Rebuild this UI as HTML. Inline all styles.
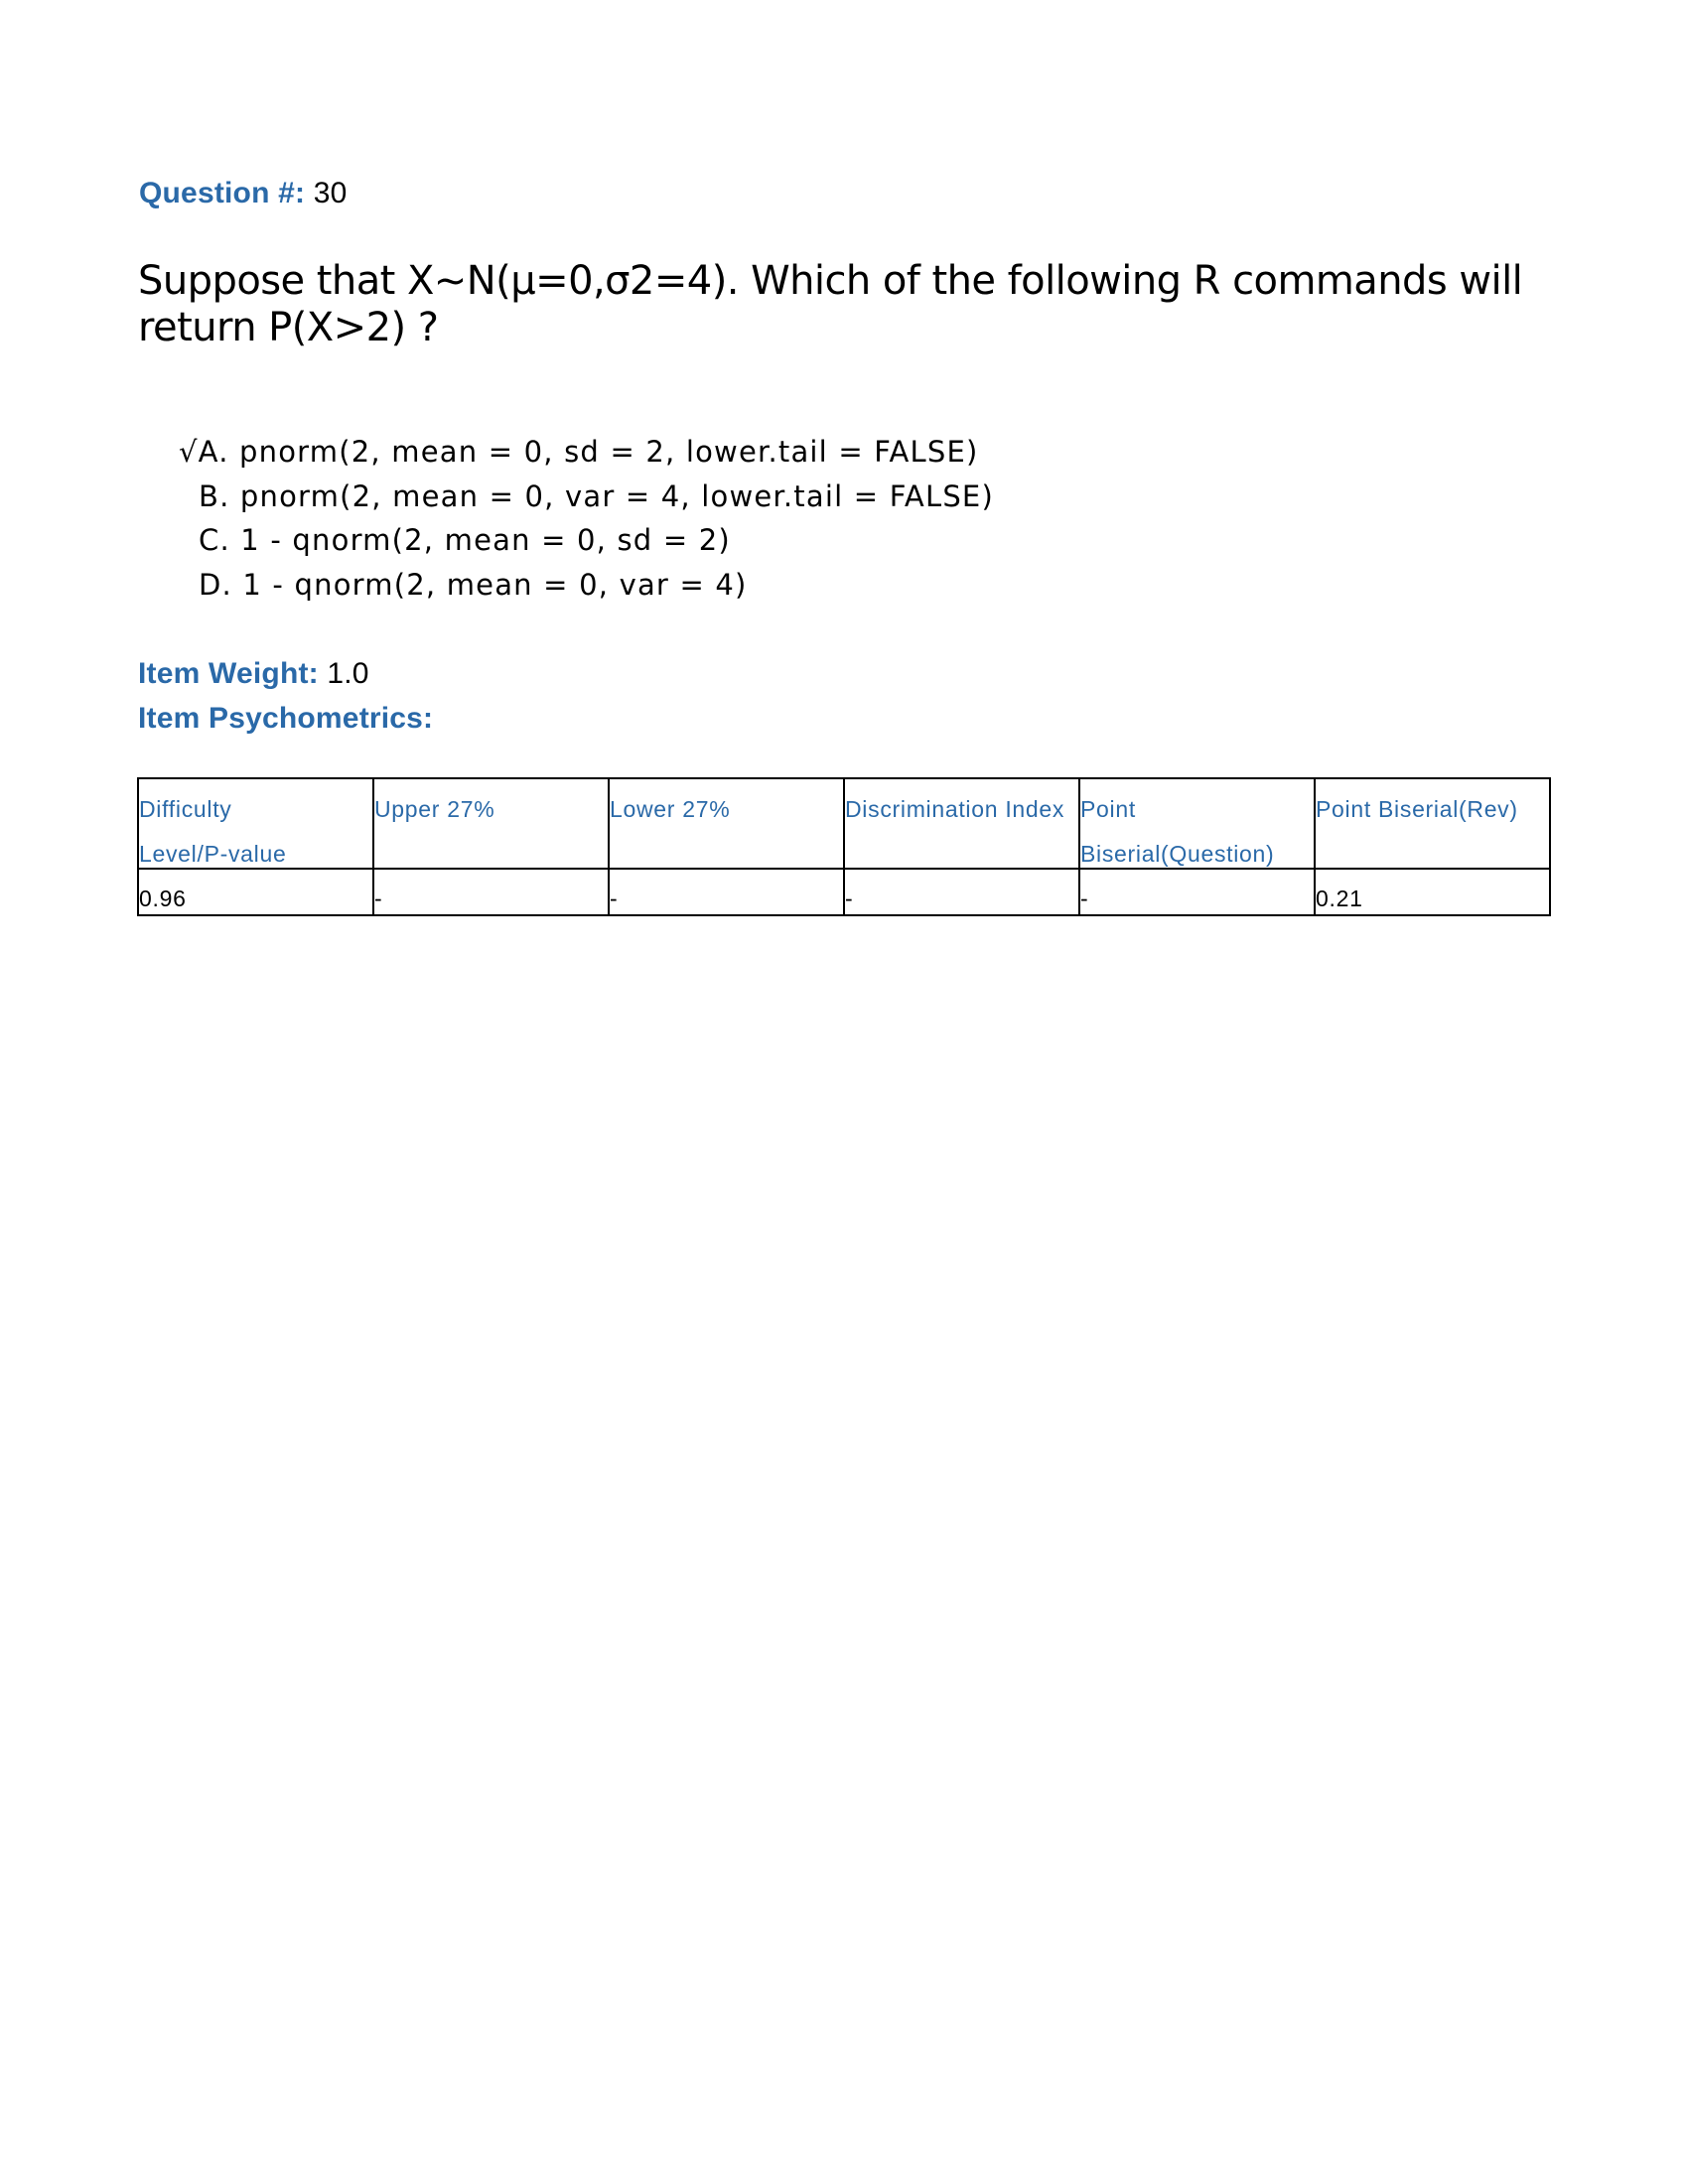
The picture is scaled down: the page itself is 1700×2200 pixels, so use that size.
<!DOCTYPE html>
<html><head><meta charset="utf-8"><style>
body{margin:0;width:1700px;height:2200px;background:#fff;position:relative;overflow:hidden}
.a{position:absolute;white-space:nowrap;color:#000}
.lib{font-family:"Liberation Sans",Arial,sans-serif}
.dv{font-family:"DejaVu Sans",Verdana,sans-serif}
.b{color:#2a69a8;font-weight:bold}
.t{position:absolute;border:2px solid #000;box-sizing:border-box}
.cell{position:absolute;font-family:"Liberation Sans",Arial,sans-serif;font-size:23px;letter-spacing:0.7px;line-height:45px;white-space:nowrap}
.h{color:#2a69a8}
</style></head><body>
<div class="a lib" style="left:140px;top:180px;font-size:30px;line-height:30px;letter-spacing:0.2px"><span class="b">Question #:</span> 30</div>
<div class="a dv" style="left:139px;top:260px;font-size:40px;line-height:47px;letter-spacing:-0.55px">Suppose that X~N(μ=0,σ2=4). Which of the following R commands will<br>return P(X&gt;2) ?</div>
<div class="a dv" style="left:180px;top:433px;font-size:29px;line-height:44.5px;letter-spacing:1.2px">√A. pnorm(2, mean = 0, sd = 2, lower.tail = FALSE)</div>
<div class="a dv" style="left:200px;top:477.5px;font-size:29px;line-height:44.5px;letter-spacing:1.2px">B. pnorm(2, mean = 0, var = 4, lower.tail = FALSE)<br>C. 1 - qnorm(2, mean = 0, sd = 2)<br>D. 1 - qnorm(2, mean = 0, var = 4)</div>
<div class="a lib" style="left:139px;top:656px;font-size:30px;line-height:45px;letter-spacing:0.2px"><span class="b">Item Weight:</span> 1.0<br><span class="b">Item Psychometrics:</span></div>
<div class="t" style="left:138px;top:783px;width:1424px;height:140px"></div>
<div style="position:absolute;left:138px;top:874px;width:1424px;height:2px;background:#000"></div>
<div style="position:absolute;left:375px;top:783px;width:2px;height:140px;background:#000"></div>
<div style="position:absolute;left:612px;top:783px;width:2px;height:140px;background:#000"></div>
<div style="position:absolute;left:849px;top:783px;width:2px;height:140px;background:#000"></div>
<div style="position:absolute;left:1086px;top:783px;width:2px;height:140px;background:#000"></div>
<div style="position:absolute;left:1323px;top:783px;width:2px;height:140px;background:#000"></div>
<div class="cell h" style="left:140px;top:793px">Difficulty<br>Level/P-value</div>
<div class="cell h" style="left:377px;top:793px">Upper 27%</div>
<div class="cell h" style="left:614px;top:793px">Lower 27%</div>
<div class="cell h" style="left:851px;top:793px">Discrimination Index</div>
<div class="cell h" style="left:1088px;top:793px">Point<br>Biserial(Question)</div>
<div class="cell h" style="left:1325px;top:793px">Point Biserial(Rev)</div>
<div class="cell" style="left:140px;top:883px">0.96</div>
<div class="cell" style="left:377px;top:883px">-</div>
<div class="cell" style="left:614px;top:883px">-</div>
<div class="cell" style="left:851px;top:883px">-</div>
<div class="cell" style="left:1088px;top:883px">-</div>
<div class="cell" style="left:1325px;top:883px">0.21</div>
</body></html>
